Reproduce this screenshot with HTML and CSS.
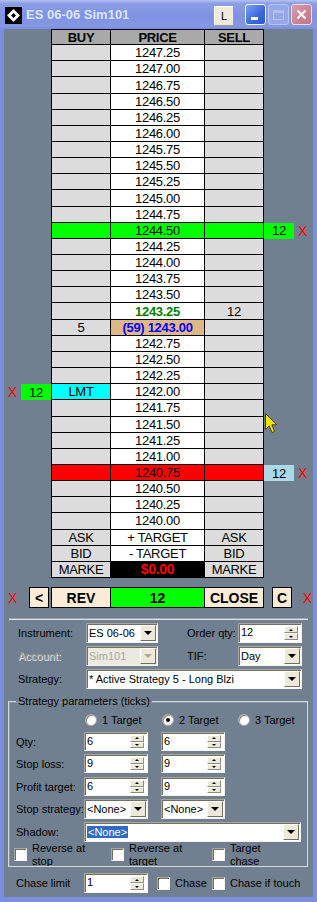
FILE: index.html
```html
<!DOCTYPE html>
<html lang="en">
<head>
  <meta charset="UTF-8">
  <title>ES 06-06 Sim101</title>
  <link rel="stylesheet" href="styles.css">
</head>
<body>
  <div class="window">
    <div class="titlebar">
      <svg class="app-icon" width="17" height="17" viewBox="0 0 17 17">
        <rect width="17" height="17" fill="#000"/>
        <path d="M8.5 2 L15 8.5 L8.5 15 L2 8.5 Z" fill="#fff"/>
        <path d="M8.5 6 L11 8.5 L8.5 11 L6 8.5 Z" fill="#000"/>
      </svg>
      <span class="title">ES 06-06 Sim101</span>
      <span class="btn-l">L</span>
      <span class="cap-btn cap-min"><i></i></span>
      <span class="cap-btn cap-max"><i></i></span>
      <span class="cap-btn cap-close">
        <svg width="11" height="11" viewBox="0 0 11 11"><path d="M1.5 1.5 L9.5 9.5 M9.5 1.5 L1.5 9.5" stroke="#fff" stroke-width="2"/></svg>
      </span>
    </div>

    <div class="client">
      <!-- price ladder, rows built below -->
      <div class="ladder" id="ladder"></div>

      <div class="order-bar">
        <div class="ob-left"><span class="x">X</span><span class="obtn sq">&lt;</span></div>
        <span class="obtn ob-rev">REV</span>
        <span class="obtn ob-qty">12</span>
        <span class="obtn ob-close">CLOSE</span>
        <div class="ob-right"><span class="obtn sq">C</span><span class="x">X</span></div>
      </div>

      <div class="sep"></div>

      <div class="form">
        <div class="frow">
          <label>Instrument:</label>
          <div class="combo"><span class="val">ES 06-06</span><span class="dd"></span></div>
          <span></span>
          <label>Order qty:</label>
          <div class="spin"><span class="val">12</span><span class="sb"><i class="up"></i><i class="dn"></i></span></div>
        </div>
        <div class="frow">
          <label class="disabled">Account:</label>
          <div class="combo off"><span class="val">Sim101</span><span class="dd"></span></div>
          <span></span>
          <label>TIF:</label>
          <div class="combo"><span class="val">Day</span><span class="dd"></span></div>
        </div>
        <div class="frow">
          <label>Strategy:</label>
          <div class="combo wide"><span class="val">* Active Strategy 5 - Long Blzi</span><span class="dd"></span></div>
        </div>
      </div>

      <fieldset class="group">
        <legend>Strategy parameters (ticks)</legend>
        <div class="radios">
          <span></span>
          <span class="opt"><i class="radio"></i>1 Target</span>
          <span class="opt"><i class="radio on"></i>2 Target</span>
          <span class="opt"><i class="radio"></i>3 Target</span>
        </div>
        <div class="prow r-qty">
          <label>Qty:</label>
          <div class="spin"><span class="val">6</span><span class="sb"><i class="up"></i><i class="dn"></i></span></div>
          <div class="spin"><span class="val">6</span><span class="sb"><i class="up"></i><i class="dn"></i></span></div>
        </div>
        <div class="prow r-stop">
          <label>Stop loss:</label>
          <div class="spin"><span class="val">9</span><span class="sb"><i class="up"></i><i class="dn"></i></span></div>
          <div class="spin"><span class="val">9</span><span class="sb"><i class="up"></i><i class="dn"></i></span></div>
        </div>
        <div class="prow r-profit">
          <label>Profit target:</label>
          <div class="spin"><span class="val">6</span><span class="sb"><i class="up"></i><i class="dn"></i></span></div>
          <div class="spin"><span class="val">9</span><span class="sb"><i class="up"></i><i class="dn"></i></span></div>
        </div>
        <div class="prow r-strat">
          <label>Stop strategy:</label>
          <div class="combo"><span class="val">&lt;None&gt;</span><span class="dd"></span></div>
          <div class="combo"><span class="val">&lt;None&gt;</span><span class="dd"></span></div>
        </div>
        <div class="prow r-shadow">
          <label>Shadow:</label>
          <div class="combo wide"><span class="val"><span class="sel">&lt;None&gt;</span></span><span class="dd"></span></div>
        </div>
        <div class="checks">
          <span class="chk c1"><i class="box"></i><span>Reverse at stop</span></span>
          <span class="chk c2"><i class="box"></i><span>Reverse at target</span></span>
          <span class="chk c3"><i class="box"></i><span>Target chase</span></span>
        </div>
      </fieldset>

      <div class="chase-row">
        <label>Chase limit</label>
        <div class="spin"><span class="val">1</span><span class="sb"><i class="up"></i><i class="dn"></i></span></div>
        <span class="chk"><i class="box"></i>Chase</span>
        <span class="chk"><i class="box"></i>Chase if touch</span>
      </div>

      <svg class="cursor" width="13" height="21" viewBox="0 0 13 21">
        <path d="M0.5 0.5 L0.5 16.5 L4.2 12.8 L7 19.5 L9.5 18.4 L6.8 11.8 L11.8 11.8 Z" fill="#f2e600" stroke="#4a4400" stroke-width="1"/>
      </svg>
    </div>
  </div>

  <script>
    // Build the ladder rows
    const ladder = document.getElementById('ladder');

    const special = {
      '1244.50': { row: 'hit-green', right: ['12', 'tag-green'] },
      '1243.25': { priceCls: 'last', sell: '12' },
      '1243.00': { buy: '5', priceCls: 'pos', text: '(59) 1243.00' },
      '1242.00': { buy: 'LMT', buyCls: 'lmt', left: ['12', 'tag-green'] },
      '1240.75': { row: 'hit-red', right: ['12', 'tag-blue'] }
    };

    function side(cls, tag) {
      if (!tag) return `<div class="side ${cls}"></div>`;
      const t = `<span class="tag ${tag[1]}">${tag[0]}</span>`;
      const x = '<span class="x">X</span>';
      return `<div class="side ${cls}">${cls === 'side-l' ? x + t : t + x}</div>`;
    }

    function row(buy, price, sell, opt) {
      opt = opt || {};
      const rc = opt.row || '';
      return side('side-l', opt.left) +
        `<div class="c buy ${rc} ${opt.buyCls || ''}">${buy}</div>` +
        `<div class="c price ${rc} ${opt.priceCls || ''}">${price}</div>` +
        `<div class="c sell ${rc}">${sell}</div>` +
        side('side-r', opt.right);
    }

    let html = row('BUY', 'PRICE', 'SELL', { row: 'hd' });
    for (let i = 0; i < 30; i++) {
      const p = (1247.25 - i * 0.25).toFixed(2);
      const s = special[p] || {};
      html += row(s.buy || '', s.text || p, s.sell || '', s);
    }
    html += row('ASK', '+ TARGET', 'ASK');
    html += row('BID', '- TARGET', 'BID');
    html += row('MARKE', '$0.00', 'MARKE', { priceCls: 'pnl' });
    ladder.innerHTML = html;
  </script>
</body>
</html>
```

FILE: styles.css
```css
/* Reset */
* {
  box-sizing: border-box;
  margin: 0;
  padding: 0;
}
body {
  width: 317px;
  height: 902px;
  overflow: hidden;
  font-family: "Liberation Sans", Arial, sans-serif;
}
.window {
  width: 317px;
  height: 902px;
  background: #7b8fe0;
  display: flex;
  flex-direction: column;
}

/* Title bar */
.titlebar {
  height: 29px;
  flex: none;
  display: flex;
  align-items: center;
  padding: 0 5px;
  background: linear-gradient(#b4c2f2, #8b9ee6 12%, #7e92e2 55%, #8598e4 90%, #7a8ddf);
}
.app-icon {
  margin-top: 2px;
}
.title {
  margin-left: 4px;
  font-size: 13px;
  font-weight: bold;
  color: #dde5f9;
}
.btn-l {
  margin-left: auto;
  margin-right: 9px;
  width: 20px;
  height: 20px;
  margin-top: 3px;
  background: #efebdc;
  border: 1px solid #fff;
  border-right-color: #9c9a8f;
  border-bottom-color: #9c9a8f;
  border-radius: 2px;
  font-size: 11px;
  display: flex;
  align-items: center;
  justify-content: center;
}
.cap-btn {
  width: 21px;
  height: 21px;
  margin-left: 2px;
  border: 1px solid #eef2fd;
  border-radius: 3px;
  display: flex;
  align-items: center;
  justify-content: center;
}
.cap-min {
  background: linear-gradient(135deg, #7ea2f5, #3a67dc 60%, #2d58d2);
  align-items: flex-end;
  justify-content: flex-start;
}
.cap-min i {
  width: 7px;
  height: 3px;
  background: #fff;
  margin: 0 0 4px 5px;
}
.cap-max {
  background: #95a9ea;
  border-color: #b9c6f2;
}
.cap-max i {
  width: 11px;
  height: 10px;
  border: 1px solid #b2c0f0;
  border-top-width: 3px;
}
.cap-close {
  background: linear-gradient(135deg, #d99aa6, #c07586);
  border-color: #ecd9e2;
}

/* Client area */
.client {
  flex: 1;
  margin: 0 4px 5px;
  background: #708090;
  position: relative;
  display: flex;
  flex-direction: column;
}

/* Ladder */
.ladder {
  display: grid;
  grid-template-columns: 47px 60px 94px 59px 49px;
  grid-template-rows: repeat(34, 1fr);
  height: 549px;
  font-size: 13px;
  letter-spacing: -0.3px;
  color: #000;
}
.ladder .c {
  display: flex;
  align-items: center;
  justify-content: center;
  background: #dcdcdc;
  border-right: 1px solid #000;
  border-bottom: 1px solid #000;
  overflow: hidden;
  white-space: nowrap;
}
.ladder .c.buy {
  border-left: 1px solid #000;
}
.ladder .c.price {
  background: #fff;
}
.ladder .c.hd {
  background: #a9a9a9;
  font-weight: bold;
  border-top: 1px solid #000;
}
.ladder .c.hit-green {
  background: #00ff00;
}
.ladder .c.hit-red {
  background: #ff0000;
}
.ladder .c.lmt {
  background: #00ffff;
}
.ladder .c.last {
  color: #008000;
  font-weight: bold;
}
.ladder .c.pos {
  background: #deb887;
  color: #0000ff;
  font-weight: bold;
}
.ladder .c.pnl {
  background: #000;
  color: #ff0000;
  font-weight: bold;
  font-size: 14px;
}
.side {
  display: flex;
  align-items: stretch;
  gap: 4px;
}
.side-l {
  justify-content: flex-end;
}
.tag {
  width: 30px;
  display: flex;
  align-items: center;
  justify-content: center;
}
.tag-green {
  background: #00ff00;
}
.tag-blue {
  background: #add8e6;
}
.x {
  color: #ff0000;
  font-size: 14px;
  font-weight: normal;
  display: flex;
  align-items: center;
  letter-spacing: 0;
}

/* Order buttons */
.order-bar {
  display: grid;
  grid-template-columns: 47px 60px 94px 59px 49px;
  height: 21px;
  margin-top: 9px;
  font-size: 14px;
  font-weight: bold;
}
.ob-left {
  display: flex;
  align-items: center;
  justify-content: space-between;
  padding: 0 2px 0 4px;
}
.ob-right {
  display: flex;
  align-items: center;
  justify-content: space-between;
  padding: 0 1px 0 8px;
}
.obtn {
  background: #faebd7;
  border: 1px solid #000;
  display: flex;
  align-items: center;
  justify-content: center;
}
.obtn.sq {
  width: 20px;
  height: 21px;
}
.ob-qty {
  background: #00ff00;
  border-left: 0;
}
.ob-close {
  border-left: 0;
}
.sep {
  margin: 10px 5px 0 5px;
  height: 2px;
  border-top: 1px solid #9aa5b1;
  border-bottom: 1px solid #dfe3e7;
}

/* Form controls */
.form {
  padding: 3px 0 0 14px;
  font-size: 11px;
}
.frow {
  display: grid;
  grid-template-columns: 68px 72px 29px 51px 64px;
  height: 20px;
  align-items: center;
  margin-bottom: 3px;
}
.frow .wide {
  grid-column: 2 / -1;
}
label {
  color: #000;
}
label.disabled {
  color: #9a988f;
  text-shadow: 1px 1px #e6e6e6;
}
.combo,
.spin {
  height: 100%;
  background: #fff;
  border: 1px solid;
  border-color: #aca899 #f4f3ee #f4f3ee #aca899;
  box-shadow: inset 1px 1px #716f64;
  padding: 1px 1px 1px 2px;
  display: flex;
  align-items: center;
  font-size: 11px;
  white-space: nowrap;
  overflow: hidden;
}
.combo .val,
.spin .val {
  flex: 1;
  overflow: hidden;
}
.combo .dd {
  width: 16px;
  height: 100%;
  flex: none;
  background: #ece9d8;
  border: 1px solid;
  border-color: #fff #716f64 #716f64 #fff;
  display: flex;
  align-items: center;
  justify-content: center;
}
.combo .dd::after {
  content: '';
  border-left: 4px solid transparent;
  border-right: 4px solid transparent;
  border-top: 4px solid #000;
}
.combo.off {
  background: #ebe9e0;
  color: #aca899;
}
.combo.off .dd::after {
  border-top-color: #aca899;
}
.sel {
  background: #316ac5;
  color: #fff;
  padding: 0 1px;
}
.spin {
  align-items: flex-start;
  padding-right: 3px;
}
.spin .val {
  line-height: 13px;
  padding-top: 1px;
}
.sb {
  width: 14px;
  height: 100%;
  display: flex;
  flex-direction: column;
  padding: 1px 0;
}
.sb i {
  flex: 1;
  background: #ece9d8;
  border: 1px solid;
  border-color: #fff #8f8c80 #8f8c80 #fff;
  display: flex;
  align-items: center;
  justify-content: center;
}
.sb i::after {
  content: '';
  border-left: 2px solid transparent;
  border-right: 2px solid transparent;
}
.sb .up::after {
  border-bottom: 2px solid #000;
}
.sb .dn::after {
  border-top: 2px solid #000;
}

/* Strategy parameters box */
.group {
  margin: 3px 5px 0 4px;
  border: 1px solid #d3d8dd;
  box-shadow: inset 1px 1px #8d98a4;
  padding: 0 0 0 7px;
  font-size: 11px;
}
.group legend {
  padding: 0 2px;
  line-height: 13px;
}
.radios {
  display: grid;
  grid-template-columns: 69px 77px 76px auto;
  height: 13px;
  margin-top: 5px;
  align-items: center;
}
.opt {
  display: flex;
  align-items: center;
  gap: 5px;
}
.radio {
  width: 12px;
  height: 12px;
  border-radius: 50%;
  background: #fff;
  border: 1px solid #aca899;
  box-shadow: inset 1px 1px #8a877a;
  display: flex;
  align-items: center;
  justify-content: center;
}
.radio.on::after {
  content: '';
  width: 4px;
  height: 4px;
  border-radius: 50%;
  background: #000;
}
.prow {
  display: grid;
  grid-template-columns: 68px 64px 13px 64px;
  height: 19px;
  align-items: center;
}
.prow > :nth-child(3) {
  grid-column: 4;
}
.r-qty { margin-top: 6px; }
.r-stop { margin-top: 3px; }
.r-profit { margin-top: 4px; }
.r-strat { margin-top: 3px; height: 20px; }
.r-shadow { margin-top: 3px; height: 20px; }
.r-shadow .wide {
  grid-column: 2 / -1;
  width: 217px;
}
.checks {
  display: grid;
  grid-template-columns: 97px 101px 80px;
  height: 24px;
  margin-left: -2px;
  overflow: hidden;
}
.chk {
  display: flex;
  align-items: center;
  gap: 5px;
  line-height: 13px;
}
.checks .chk {
  align-items: flex-start;
}
.checks .box {
  margin-top: 6px;
}
.c1 span { width: 62px; }
.c2 span { width: 62px; }
.c3 span { width: 56px; }
.box {
  width: 13px;
  height: 13px;
  flex: none;
  background: #fff;
  border: 1px solid;
  border-color: #aca899 #f4f3ee #f4f3ee #aca899;
  box-shadow: inset 1px 1px #716f64;
}

/* Chase row */
.chase-row {
  display: grid;
  grid-template-columns: 68px 64px 64px auto;
  height: 20px;
  margin-top: 6px;
  padding-left: 12px;
  align-items: center;
  font-size: 11px;
}
.chase-row .chk {
  padding-left: 9px;
  gap: 5px;
}
.chase-row .chk + .chk {
  padding-left: 0;
}

/* mouse pointer over the ladder */
.cursor {
  position: absolute;
  left: 261px;
  top: 384px;
}
```
